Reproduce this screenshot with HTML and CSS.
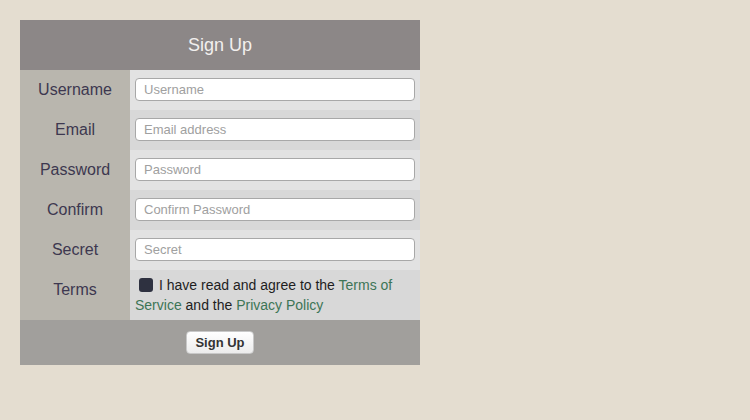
FILE: index.html
```html
<!DOCTYPE html>
<html>
<head>
<meta charset="utf-8">
<link rel="stylesheet" href="styles.css">
</head>
<body>
<form class="signup">
  <div class="header">Sign Up</div>
  <div class="row light">
    <label class="label">Username</label>
    <div class="field"><input class="input" placeholder="Username"></div>
  </div>
  <div class="row dark">
    <label class="label">Email</label>
    <div class="field"><input class="input" placeholder="Email address"></div>
  </div>
  <div class="row light">
    <label class="label">Password</label>
    <div class="field"><input class="input" placeholder="Password"></div>
  </div>
  <div class="row dark">
    <label class="label">Confirm</label>
    <div class="field"><input class="input" placeholder="Confirm Password"></div>
  </div>
  <div class="row light">
    <label class="label">Secret</label>
    <div class="field"><input class="input" placeholder="Secret"></div>
  </div>
  <div class="row dark terms-row">
    <label class="label">Terms</label>
    <div class="field terms"><span class="check"></span>I have read and agree to the <a class="link">Terms of Service</a> and the <a class="link">Privacy Policy</a></div>
  </div>
  <div class="footer"><button type="button" class="btn">Sign Up</button></div>
</form>
</body>
</html>
```
FILE: styles.css
```css
html, body {
  margin: 0;
  padding: 0;
  background: #e4ddd0;
  font-family: "Liberation Sans", Arial, sans-serif;
}
body {
  padding: 20px;
}
.signup {
  width: 400px;
  margin: 0;
}
.header {
  height: 50px;
  background: #8c8787;
  color: #f2f0ee;
  font-size: 18px;
  display: flex;
  align-items: center;
  justify-content: center;
}
.row {
  display: flex;
  min-height: 40px;
}
.light { background: #e2e2e2; }
.dark { background: #d8d8d8; }
.label {
  width: 110px;
  flex: none;
  background: #b9b6ae;
  color: #3d3850;
  font-size: 16px;
  display: flex;
  align-items: center;
  justify-content: center;
}
.terms-row .label {
  align-items: flex-start;
  padding-top: 11px;
}
.field {
  flex: 1;
  display: flex;
  align-items: flex-start;
  padding: 8px 5px 0;
}
.input {
  box-sizing: border-box;
  width: 280px;
  height: 23px;
  margin: 0;
  border: 1px solid #a8a8a8;
  border-radius: 4px;
  background: #fff;
  font-family: "Liberation Sans", Arial, sans-serif;
  font-size: 13px;
  padding: 0 8px;
  color: #333;
}
.input::placeholder {
  color: #a0a0a0;
}
.terms {
  display: block;
  font-size: 14px;
  line-height: 20px;
  color: #1e1e1e;
  padding: 5px 5px 5px 5px;
  height: 50px;
  box-sizing: border-box;
}
.check {
  display: inline-block;
  width: 14px;
  height: 14px;
  background: #2e3140;
  border-radius: 3px;
  margin: 0 6px 0 4px;
  vertical-align: -2px;
}
.link {
  color: #3d7556;
  text-decoration: none;
}
.footer {
  height: 45px;
  background: #a19f9c;
  display: flex;
  align-items: center;
  justify-content: center;
}
.btn {
  font-family: "Liberation Sans", Arial, sans-serif;
  font-weight: bold;
  font-size: 13px;
  color: #333;
  height: 23px;
  width: 68px;
  padding: 0;
  border: 1px solid #c8c8c8;
  border-radius: 4px;
  background: linear-gradient(#ffffff, #ececec);
}
```
